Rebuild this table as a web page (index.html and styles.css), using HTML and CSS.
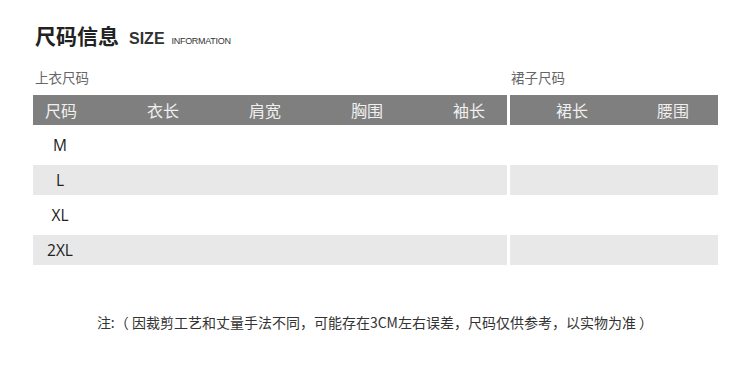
FILE: index.html
```html
<!DOCTYPE html>
<html lang="zh-CN">
<head>
<meta charset="utf-8">
<title>尺码信息</title>
<link rel="stylesheet" href="styles.css">
</head>
<body>
<div class="page">
  <h1 class="title"><span class="title-cn">尺码信息</span><span class="title-en">SIZE</span><span class="title-sub">INFORMATION</span></h1>
  <div class="tables">
    <section class="tbl tbl-top">
      <div class="caption">上衣尺码</div>
      <div class="row head">
        <div class="cell c-size">尺码</div>
        <div class="cell">衣长</div>
        <div class="cell">肩宽</div>
        <div class="cell">胸围</div>
        <div class="cell">袖长</div>
      </div>
      <div class="row"><div class="cell size">M</div></div>
      <div class="row alt"><div class="cell size">L</div></div>
      <div class="row"><div class="cell size">XL</div></div>
      <div class="row alt"><div class="cell size">2XL</div></div>
    </section>
    <section class="tbl tbl-skirt">
      <div class="caption">裙子尺码</div>
      <div class="row head">
        <div class="cell">裙长</div>
        <div class="cell">腰围</div>
      </div>
      <div class="row"></div>
      <div class="row alt"></div>
      <div class="row"></div>
      <div class="row alt"></div>
    </section>
  </div>
  <p class="note">注:（ 因裁剪工艺和丈量手法不同，可能存在3CM左右误差，尺码仅供参考，以实物为准 ）</p>
</div>
</body>
</html>
```
FILE: styles.css
```css
html, body {
  margin: 0;
  padding: 0;
  background: #fff;
}
.page {
  width: 750px;
  height: 381px;
  padding: 22px 0 0 33px;
  box-sizing: border-box;
  font-family: "Noto Sans CJK SC", "Noto Sans", sans-serif;
  color: #333;
}
.title {
  margin: 0;
  padding-left: 2px;
  display: flex;
  align-items: baseline;
  height: 26px;
  line-height: 26px;
  font-weight: normal;
}
.title-cn {
  font-size: 21px;
  font-weight: bold;
  color: #222;
}
.title-en {
  font-family: "Liberation Sans", Arial, sans-serif;
  font-size: 16px;
  font-weight: bold;
  color: #333;
  margin-left: 10px;
}
.title-sub {
  font-family: "Liberation Sans", Arial, sans-serif;
  font-size: 9px;
  color: #333;
  margin-left: 7px;
  letter-spacing: -0.3px;
}
.tables {
  display: flex;
  gap: 3px;
  margin-top: 21px;
}
.caption {
  height: 26px;
  line-height: 17px;
  padding-left: 2px;
  font-size: 13.5px;
  color: #666;
}
.tbl-top { width: 474px; }
.tbl-skirt { width: 208px; }
.tbl-skirt .caption { padding-left: 1px; }
.row {
  display: flex;
  height: 30px;
  margin-top: 5px;
}
.row.head {
  margin-top: 0;
  background: #7f7f7f;
  color: #f0f0f0;
  font-size: 16px;
  line-height: 30px;
}
.row.alt { background: #e8e8e8; }
.head .cell { flex: none; }
.tbl-top .head { padding-left: 12px; }
.tbl-top .head .cell { width: 102px; }
.tbl-skirt .head { padding-left: 46px; }
.tbl-skirt .head .cell { width: 101px; }
.size {
  width: 54px;
  text-align: center;
  font-family: "Open Sans", "Noto Sans", sans-serif;
  font-size: 15.5px;
  line-height: 30px;
  color: #222;
}
.note {
  margin: 47px 0 0 -33px;
  text-align: center;
  font-size: 14px;
  color: #333;
  line-height: 20px;
}
```
